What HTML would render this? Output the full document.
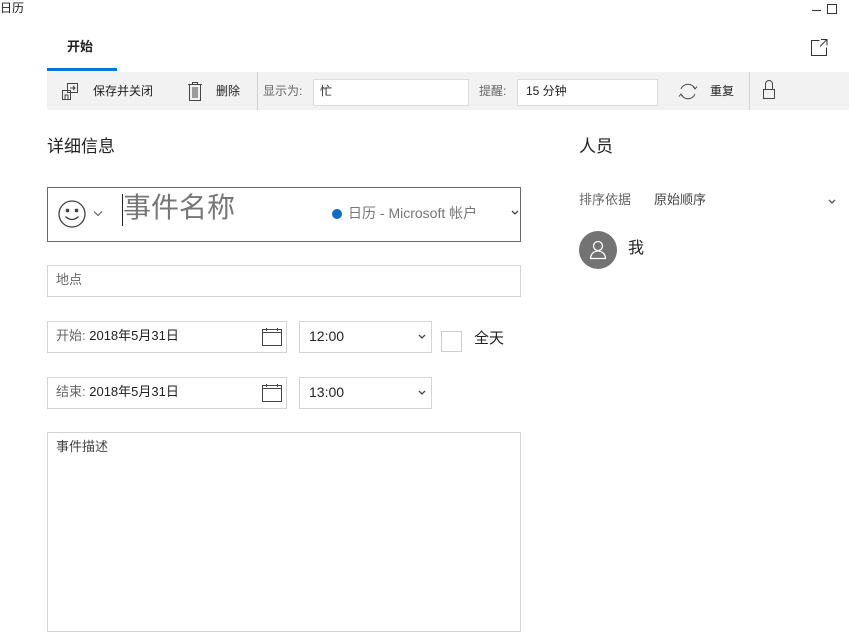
<!DOCTYPE html>
<html><head><meta charset="utf-8"><style>
*{margin:0;padding:0;box-sizing:border-box}
body{width:849px;height:616px;background:#fff;position:relative;overflow:hidden;font-family:"Liberation Sans","Noto Sans CJK SC",sans-serif;color:#222;font-size:13px;line-height:1.2}
.a{position:absolute}
.box{position:absolute;border:1px solid #d4d4d4;background:#fff}
.t{position:absolute;white-space:nowrap}
.g{color:#666}
</style></head><body>
<div class="t" style="left:0;top:1px;font-size:12px">日历</div>
<div class="a" style="left:812px;top:10px;width:9px;height:1px;background:#333"></div>
<div class="a" style="left:827px;top:4px;width:10px;height:10px;border:1px solid #333"></div>

<div class="t" style="left:67px;top:39px;font-size:13px;font-weight:bold">开始</div>
<div class="a" style="left:47px;top:68px;width:70px;height:3px;background:#0078d7"></div>
<svg class="a" style="left:809px;top:37px" width="20" height="20" viewBox="0 0 20 20" fill="none" stroke="#333" stroke-width="1"><path d="M10.5 3.5H2.5V18.5H17.5V10.5M12 2.5H18V8.5M18 2.5L11 9.5"/></svg>

<div class="a" style="left:47px;top:72px;width:802px;height:38px;background:#f2f2f2"></div>
<svg class="a" style="left:62px;top:83px" width="18" height="18" viewBox="0 0 18 18" fill="none" stroke="#444"><rect x="5.5" y="0.5" width="10" height="9"/><path d="M8 5h5M11 3l2 2-2 2"/><rect x="0.5" y="7.5" width="8" height="9"/><rect x="3" y="12" width="3" height="4.5"/></svg>
<div class="t" style="left:93px;top:84px;font-size:12px">保存并关闭</div>
<svg class="a" style="left:188px;top:82px" width="14" height="19" viewBox="0 0 14 19" fill="none" stroke="#444"><path d="M0 2.5h14M4.5 2.5V0.5h5v2M1.5 2.5v16h11v-16M5 5v11M7 5v11M9 5v11"/></svg>
<div class="t" style="left:216px;top:84px;font-size:12px">删除</div>
<div class="a" style="left:257px;top:72px;width:1px;height:38px;background:#d0d0d0"></div>
<div class="t g" style="left:263px;top:84px;font-size:12px">显示为:</div>
<div class="box" style="left:313px;top:79px;width:156px;height:27px;border-color:#ddd"></div>
<div class="t" style="left:320px;top:84px;font-size:12px">忙</div>
<div class="t g" style="left:479px;top:84px;font-size:12px">提醒:</div>
<div class="box" style="left:517px;top:79px;width:141px;height:27px;border-color:#ddd"></div>
<div class="t" style="left:526px;top:84px;font-size:12px">15 分钟</div>
<svg class="a" style="left:678px;top:82px" width="20" height="19" viewBox="0 0 20 19" fill="none" stroke="#444"><path d="M3 7A7.5 7.5 0 0 1 17 7M17 12A7.5 7.5 0 0 1 3 12M15 4.5l2 2.5 2-2.5M1 14.5l2-2.5 2 2.5"/></svg>
<div class="t" style="left:710px;top:84px;font-size:12px">重复</div>
<div class="a" style="left:749px;top:72px;width:1px;height:38px;background:#d0d0d0"></div>
<svg class="a" style="left:762px;top:80px" width="14" height="20" viewBox="0 0 14 20" fill="none" stroke="#444"><path d="M3.5 9V4a3.5 3.5 0 0 1 7 0v5M1.5 9.5h11v9h-11z"/></svg>

<div class="t" style="left:47px;top:137px;font-size:17px">详细信息</div>
<div class="t" style="left:579px;top:137px;font-size:17px">人员</div>

<div class="box" style="left:47px;top:187px;width:474px;height:55px;border-color:#6a6a6a"></div>
<svg class="a" style="left:57px;top:199px" width="30" height="30" viewBox="0 0 30 30" fill="none" stroke="#444" stroke-width="1.3"><circle cx="15" cy="15" r="13"/><circle cx="10.5" cy="11.5" r="1.2" fill="#444"/><circle cx="19.5" cy="11.5" r="1.2" fill="#444"/><path d="M8.5 17.5q6.5 6 13 0"/></svg>
<svg class="a" style="left:93px;top:210px" width="10" height="7" viewBox="0 0 10 7" fill="none" stroke="#555"><path d="M1 1.5l4 4 4-4"/></svg>
<div class="a" style="left:122px;top:194px;width:1px;height:32px;background:#222"></div>
<div class="t" style="left:123px;top:191px;font-size:28px;color:#777">事件名称</div>
<div class="a" style="left:332px;top:209px;width:10px;height:10px;border-radius:50%;background:#0c6dc8"></div>
<div class="t" style="left:348px;top:205px;font-size:14px;color:#777">日历 - Microsoft 帐户</div>
<svg class="a" style="left:511px;top:210px" width="8" height="6" viewBox="0 0 8 6" fill="none" stroke="#444" stroke-width="1.3"><path d="M1 1l3 3 3-3"/></svg>

<div class="box" style="left:47px;top:265px;width:474px;height:32px"></div>
<div class="t g" style="left:56px;top:272px;font-size:13px">地点</div>

<div class="box" style="left:47px;top:321px;width:240px;height:32px"></div>
<div class="t" style="left:56px;top:328px;font-size:13px"><span class="g">开始:</span> 2018年5月31日</div>
<svg class="a" style="left:262px;top:328px" width="20" height="18" viewBox="0 0 20 18" fill="none" stroke="#444"><rect x="0.5" y="1.5" width="19" height="16"/><path d="M0.5 4.5h19M4.5 0v3M15.5 0v3"/></svg>
<div class="box" style="left:299px;top:321px;width:133px;height:32px"></div>
<div class="t" style="left:309px;top:328px;font-size:14px">12:00</div>
<svg class="a" style="left:418px;top:334px" width="8" height="6" viewBox="0 0 8 6" fill="none" stroke="#444" stroke-width="1.3"><path d="M1 1l3 3 3-3"/></svg>
<div class="box" style="left:441px;top:331px;width:21px;height:21px;border-color:#ccc"></div>
<div class="t" style="left:474px;top:330px;font-size:15px">全天</div>

<div class="box" style="left:47px;top:377px;width:240px;height:32px"></div>
<div class="t" style="left:56px;top:384px;font-size:13px"><span class="g">结束:</span> 2018年5月31日</div>
<svg class="a" style="left:262px;top:384px" width="20" height="18" viewBox="0 0 20 18" fill="none" stroke="#444"><rect x="0.5" y="1.5" width="19" height="16"/><path d="M0.5 4.5h19M4.5 0v3M15.5 0v3"/></svg>
<div class="box" style="left:299px;top:377px;width:133px;height:32px"></div>
<div class="t" style="left:309px;top:384px;font-size:14px">13:00</div>
<svg class="a" style="left:418px;top:390px" width="8" height="6" viewBox="0 0 8 6" fill="none" stroke="#444" stroke-width="1.3"><path d="M1 1l3 3 3-3"/></svg>

<div class="box" style="left:47px;top:432px;width:474px;height:200px"></div>
<div class="t" style="left:56px;top:439px;font-size:13px;color:#444">事件描述</div>

<div class="t g" style="left:579px;top:192px;font-size:13px">排序依据</div>
<div class="t" style="left:654px;top:192px;font-size:13px;color:#444">原始顺序</div>
<svg class="a" style="left:828px;top:199px" width="8" height="6" viewBox="0 0 8 6" fill="none" stroke="#555" stroke-width="1.3"><path d="M1 1l3 3 3-3"/></svg>
<div class="a" style="left:579px;top:231px;width:38px;height:38px;border-radius:50%;background:#737373"></div>
<svg class="a" style="left:589px;top:240px" width="18" height="20" viewBox="0 0 18 20" fill="none" stroke="#fff" stroke-width="1.3"><circle cx="9" cy="6" r="4.5"/><path d="M1.5 18.5a7.5 7.5 0 0 1 15 0z"/></svg>
<div class="t" style="left:628px;top:239px;font-size:16px">我</div>
</body></html>
